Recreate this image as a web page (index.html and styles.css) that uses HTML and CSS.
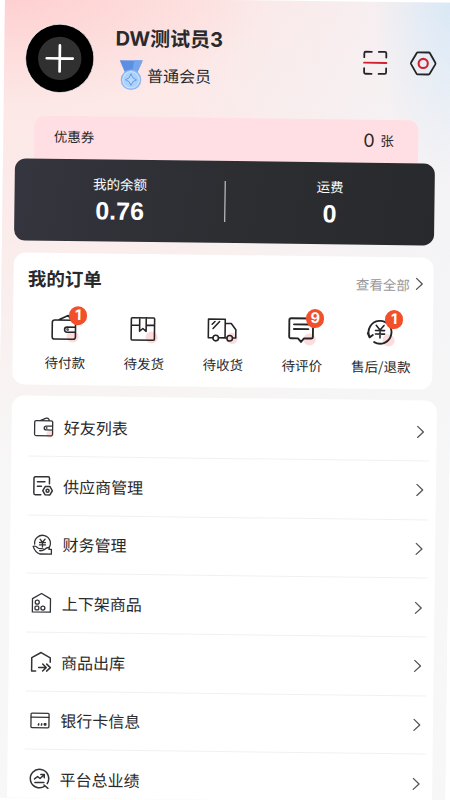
FILE: index.html
```html
<!DOCTYPE html>
<html lang="zh-CN">
<head>
<meta charset="utf-8">
<title>我的</title>
<link rel="stylesheet" href="styles.css">
</head>
<body>
<main class="page">
  <header class="profile">
    <div class="avatar"><svg width="69" height="69" viewBox="0 0 69 69"><circle cx="34.5" cy="34.5" r="34.2" fill="#000" stroke="#fff" stroke-width=".7"/><circle cx="34.5" cy="34.5" r="21.7" fill="#303030"/><path d="M21.5 34.5h26M34.5 21.5v26" stroke="#fff" stroke-width="2.7" stroke-linecap="round"/></svg></div>
    <div class="who">
      <h1 class="name">DW测试员3</h1>
      <div class="level">
        <svg width="24" height="31" viewBox="0 0 24 31"><path d="M.5.5h23L18 13H6z" fill="#5b8fe3"/><path d="M15 .5h8.500L18 13h-5z" fill="#76a5ef"/><circle cx="12" cy="20" r="10.300" fill="#8ab6f3"/><circle cx="12" cy="20" r="8.300" fill="#aed1fa" stroke="#d3e8ff" stroke-width="1"/><path d="M12 14.500q1 4.500 5.500 5.500q-4.500 1-5.500 5.500q-1-4.500-5.500-5.500q4.500-1 5.500-5.500z" fill="#b9d9ff" stroke="#5b93e4" stroke-width=".9"/></svg>
        <span>普通会员</span>
      </div>
    </div>
    <div class="tools">
      <svg width="26" height="26" viewBox="0 0 26 26" fill="none" stroke="#242428" stroke-width="1.8" stroke-linecap="round" stroke-linejoin="round"><path d="M2 7.500V3.500a1.500 1.500 0 0 1 1.500-1.500H9.500M16.500 2h6A1.500 1.500 0 0 1 24 3.500V7.500M2 18.500v4A1.500 1.500 0 0 0 3.500 24H9.500M16.500 24h6a1.500 1.500 0 0 0 1.500-1.500V18.500"/><path d="M1.800 13h22.400" stroke="#d0212f"/></svg>
      <svg width="28" height="26" viewBox="0 0 28 26" fill="none" stroke="#242428" stroke-width="1.800" stroke-linejoin="round"><path d="M8.600 2h10.800q.8 0 1.200.7l5.500 9.500q.4.800 0 1.600l-5.500 9.500q-.4.700-1.200.7H8.600q-.8 0-1.200-.7L1.900 13.800q-.4-.8 0-1.600l5.500-9.500Q7.800 2 8.600 2z"/><circle cx="14" cy="13" r="4.600" stroke="#d0212f" stroke-width="2.100"/></svg>
    </div>
  </header>

  <section class="coupon"><span>优惠券</span><span class="count"><b>0</b>张</span></section>

  <section class="wallet">
    <div class="stat"><span>我的余额</span><strong>0.76</strong></div>
    <i class="bar"></i>
    <div class="stat"><span>运费</span><strong>0</strong></div>
  </section>

  <section class="orders">
    <div class="orders-head"><h2>我的订单</h2><a class="all">查看全部<svg width="8" height="13" viewBox="0 0 8 13"><path d="M1 1l5.800 5.500L1 12"/></svg></a></div>
    <div class="grid">
      <div class="item"><div class="pic">
        <svg viewBox="0 0 34 34"><circle class="spot" cx="26.500" cy="26" r="6.500"/><path d="M29.500 19.300V11a2.500 2.500 0 0 0-2.500-2.500H7A2.500 2.500 0 0 0 4.500 11v15.500A2.500 2.500 0 0 0 7 29h20a2.500 2.500 0 0 0 2.500-2.500V22M12 8l9.500-4.500 3.500 5M29.500 16H20.500a2.700 2.700 0 0 0 0 5.500h9z"/><circle cx="21" cy="18.700" r=".5"/></svg><em class="badge">1</em></div><span>待付款</span></div>
      <div class="item"><div class="pic">
        <svg viewBox="0 0 34 34"><circle class="spot" cx="26.500" cy="26" r="6.500"/><path d="M5.500 5h23a1 1 0 0 1 1 1v22a1 1 0 0 1-1 1h-23a1 1 0 0 1-1-1V6a1 1 0 0 1 1-1zM4.500 13h9M20.500 13h9M13.500 5v14.500l3.500-3 3.500 3V5"/></svg></div><span>待发货</span></div>
      <div class="item"><div class="pic">
        <svg viewBox="0 0 34 34"><circle class="spot" cx="28" cy="26" r="6"/><path d="M7.500 25.500H2.500V5.500H20.500V25.500H13.500M20.500 10H27l5 6.500v9h-2.500M20.500 25.500h1.500M6.500 11l3-3M7.500 15.500l7-7.500"/><circle cx="10.500" cy="25.800" r="3"/><circle cx="25.500" cy="25.800" r="3"/></svg></div><span>待收货</span></div>
      <div class="item"><div class="pic">
        <svg viewBox="0 0 34 34"><circle class="spot" cx="26.500" cy="26" r="6.500"/><path stroke-width="2" d="M6.500 3.500h21.500a2 2 0 0 1 2 2v17.500a2 2 0 0 1-2 2h-7.500L17.300 28.800 14 25H6.500a2 2 0 0 1-2-2V5.500a2 2 0 0 1 2-2zM9.500 10h15.500M9.500 15h15.500"/></svg><em class="badge">9</em></div><span>待评价</span></div>
      <div class="item"><div class="pic">
        <svg viewBox="0 0 34 34"><circle class="spot" cx="26.500" cy="26" r="6.500"/><path stroke-width="2" d="M6 22.500A12.300 12.300 0 1 1 11 28M4 18.500l2 4.500 3.500-2.500"/><path stroke-width="1.700" d="M13 10l4.200 5 4.200-5M12.300 15.500h9.800M12.300 19.300h9.800M17.200 15v8.500"/></svg><em class="badge">1</em></div><span>售后/退款</span></div>
    </div>
  </section>

  <nav class="menu">
    <a class="row"><svg class="ico" viewBox="0 0 20 20"><circle cx="16.500" cy="17.500" r="3.500" fill="#fcdcdc" stroke="none"/><path d="M19 10V5.500A1.500 1.500 0 0 0 17.500 4h-15A1.500 1.500 0 0 0 1 5.500v12A1.500 1.500 0 0 0 2.500 19h15a1.500 1.500 0 0 0 1.500-1.500V13M7 3.700l5.500-2.300q1.500-.5 2.500 1l.7 1.300M19 9.300h-6.500a1.900 1.900 0 0 0 0 3.900H19z"/><circle cx="13" cy="11.200" r=".3"/></svg><span>好友列表</span><svg class="arr" viewBox="0 0 8 13"><path d="M1 1l5.800 5.500L1 12"/></svg></a>
    <a class="row"><svg class="ico bold" viewBox="0 0 20 20"><path d="M8 19H2.500A1.500 1.500 0 0 1 1 17.500v-15A1.500 1.500 0 0 1 2.500 1H15a1.500 1.500 0 0 1 1.500 1.500V8M4.500 6h7.500M4.500 10.500h4"/><path d="M12.300 10.800h4.800l2.400 4.100-2.400 4.200h-4.800l-2.400-4.200z"/><circle cx="14.700" cy="15" r="1.500"/></svg><span>供应商管理</span><svg class="arr" viewBox="0 0 8 13"><path d="M1 1l5.800 5.500L1 12"/></svg></a>
    <a class="row"><svg class="ico" viewBox="0 0 20 20"><path d="M2.500 9.500A7.900 7.900 0 1 1 16.800 13M7.800 4.500l2.500 3 2.500-3M7.300 7.800h6M7.300 10.200h6M10.300 7.800v4.500"/><path d="M1 11.800q2.500-.8 4.500 1.200 1.500 1.200 4 .9 2.500-.1 2 1.300-.5 1-4 .8M12 15q3-2.500 4.500-2.300 1 .3.3 1.800H19.300V19.300H8Q3 18 1 11.800"/></svg><span>财务管理</span><svg class="arr" viewBox="0 0 8 13"><path d="M1 1l5.800 5.500L1 12"/></svg></a>
    <a class="row"><svg class="ico" viewBox="0 0 20 20"><path d="M1 19.300V6L10 .8 19 6v13.300z"/><circle cx="5.800" cy="9.500" r="2"/><rect x="3.600" y="13.400" width="3.800" height="3.800" rx="1"/><circle cx="11.500" cy="15.300" r="2"/></svg><span>上下架商品</span><svg class="arr" viewBox="0 0 8 13"><path d="M1 1l5.800 5.500L1 12"/></svg></a>
    <a class="row"><svg class="ico bold" viewBox="0 0 20 20"><path d="M5 19.300H1V6L10.300.8 19.500 6v4.500M8 15.800h7M12 12.300l3.500 3.500-3.500 3.500M16 12.300l3.700 3.500-3.700 3.500"/></svg><span>商品出库</span><svg class="arr" viewBox="0 0 8 13"><path d="M1 1l5.800 5.500L1 12"/></svg></a>
    <a class="row"><svg class="ico" viewBox="0 0 20 20"><rect x="1" y="2.500" width="18" height="14.500" rx="1"/><path d="M1 6.500h18"/><path d="M8.500 14.200l.3-1M11.500 14.200l.3-1M14.500 14.200v-1.200h1.300v1.200z" stroke-width="1.600"/></svg><span>银行卡信息</span><svg class="arr" viewBox="0 0 8 13"><path d="M1 1l5.800 5.500L1 12"/></svg></a>
    <a class="row"><svg class="ico bold" viewBox="0 0 20 20"><path d="M15.800 17.200A9.200 9.200 0 1 1 18 14.800M14.800 16.200l4 3.300M5.300 10.300l3-2.500 2.500 2 4-3.800M11.500 5.800h3.500V9M5.700 13.800h9"/></svg><span>平台总业绩</span><svg class="arr" viewBox="0 0 8 13"><path d="M1 1l5.800 5.500L1 12"/></svg></a>
  </nav>
</main>
</body>
</html>
```
FILE: styles.css
```css
* { box-sizing: border-box; margin: 0; padding: 0; }
html, body { width: 450px; height: 800px; overflow: hidden; background: #fff; }
body { font-family: "Noto Sans CJK SC", sans-serif; color: #29292b; }
svg { display: block; flex: none; fill: none; stroke-linecap: round; stroke-linejoin: round; }

.page {
  width: 450px;
  height: 800px;
  overflow: hidden;
  transform: rotate(0.715deg);
  background:
    linear-gradient(180deg, rgba(247,247,247,0) 0, rgba(247,247,247,.3) 200px, #f7f7f7 480px),
    radial-gradient(ellipse 260px 110px at 0 0, #ffcfd0, rgba(255,207,208,0)),
    radial-gradient(ellipse 80px 180px at 100% 0, #d8e8f6, rgba(216,232,246,0)),
    linear-gradient(100deg, #fde5e3 0, #fce7e6 35%, #f6eff1 65%, #f0f2f7 90%, #edf2f9 100%);
}

.profile { display: flex; height: 117.5px; padding: 26px 17px 0 21px; }
.avatar { width: 69px; height: 69px; }
.who { margin-left: 21px; }
.name { font: 700 20px/28px Inter, "Noto Sans CJK SC", sans-serif; white-space: nowrap; }
.level { display: flex; align-items: center; gap: 4px; margin: 7px 0 0 4px; height: 31px; font-size: 16px; line-height: 24px; }
.level span { margin-top: -2px; }
.tools { display: flex; gap: 21.500px; margin: 21.500px 0 0 auto; height: 26px; }

.coupon {
  display: flex; justify-content: space-between;
  width: 384.500px; height: 43px; margin-left: 30.500px; padding: 8.500px 24.500px 0 20px;
  border-radius: 10px 10px 0 0;
  background: #ffdfe3;
  font-size: 13.500px; line-height: 24px;
}
.count b { margin-right: 5.500px; font: 400 18px/24px Inter, sans-serif; vertical-align: -1px; }

.wallet {
  display: flex; align-items: center;
  width: 420px; height: 82.600px; margin-left: 12.300px;
  border-radius: 11px;
  background: linear-gradient(100deg, #34353e, #2d2e32 50%, #28292c);
  color: #fff;
}
.stat { width: 210px; margin-top: -1.500px; text-align: center; }
.stat span { display: block; font-size: 13.500px; line-height: 20px; }
.stat strong { display: block; margin-top: 2px; font: 700 25px/30px "Liberation Sans", sans-serif; }
.bar { flex: none; width: 1.500px; height: 41px; margin: 0 -.75px; background: #dedee0; }

.orders {
  width: 420px; height: 132.300px; margin: 11.800px 0 0 12.400px; padding: 11.500px 10px 0 12.500px;
  border-radius: 12px;
  background: #fff;
}
.orders-head { display: flex; justify-content: space-between; align-items: center; height: 28px; padding-left: 1.500px; }
.orders-head h2 { font-size: 18.500px; line-height: 28px; }
.all { display: flex; align-items: center; gap: 6px; margin-top: 3px; font-size: 13.500px; color: #97979a; }
.all svg { width: 8px; height: 13px; stroke: #555; stroke-width: 1.300; }

.grid { display: grid; grid-template-columns: repeat(5, 79px); margin-top: 21.200px; }
.item { display: flex; flex-direction: column; align-items: center; }
.item span { margin-top: 10.300px; font-size: 13.500px; line-height: 20px; white-space: nowrap; }
.pic { position: relative; width: 28px; height: 28px; margin-left: -1.800px; }
.pic svg { width: 28px; height: 28px; overflow: visible; stroke: #252528; stroke-width: 1.700; transform: scale(1.13); }
.pic .spot { fill: #fcdcdc; stroke: none; }
.badge {
  position: absolute; left: 18.500px; top: -7.500px;
  width: 18.500px; height: 18.500px; border-radius: 50%;
  background: #f1502b; color: #fff;
  font: 700 14.500px/18.500px Inter, sans-serif; text-align: center;
}

.menu {
  width: 425.300px; height: 440px; margin: 11.300px 0 0 12.200px; padding: 1.800px 7px 0 16.500px;
  border-radius: 12px;
  background: #fff;
}
.row { display: flex; align-items: center; height: 58.700px; padding: 0 5.800px 0 5.300px; border-bottom: 1px solid #f1f1f1; font-size: 16px; line-height: 24px; }
.row .ico { width: 20px; height: 20px; margin-right: 10.300px; stroke: #333337; stroke-width: 1.300; overflow: visible; }
.row .bold { stroke-width: 1.500; }
.row span { margin-top: -.5px; }
.row .arr { width: 8px; height: 13px; margin-left: auto; stroke: #555; stroke-width: 1.300; }
```
